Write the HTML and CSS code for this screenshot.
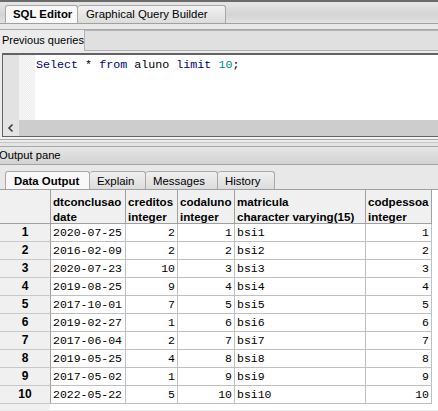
FILE: index.html
```html
<!DOCTYPE html>
<html>
<head>
<meta charset="utf-8">
<link rel="stylesheet" href="styles.css">
</head>
<body>
<div class="topline"></div>
<div class="tabbar">
  <div class="tab active">SQL Editor</div>
  <div class="tab gqb">Graphical Query Builder</div>
</div>
<div class="tabsep"></div>
<div class="prevrow">
  <span class="prevlabel">Previous queries</span>
  <div class="combo"></div>
</div>
<div class="editor">
  <div class="editbody">
    <div class="gutter"></div>
    <div class="fold"></div>
    <div class="code"><span class="kw">Select</span> * <span class="kw">from</span> aluno <span class="kw">limit</span> <span class="num">10</span>;</div>
  </div>
  <div class="hscroll">
    <div class="arrow"><svg width="16" height="16" viewBox="0 0 16 16"><path d="M9.5 4.5 L6 8 L9.5 11.5" fill="none" stroke="#404040" stroke-width="1.6"/></svg></div>
    <div class="track"></div>
  </div>
</div>
<div class="splitter"></div>
<div class="outhead">Output pane</div>
<div class="outgap"></div>
<div class="tabbar2">
  <div class="tab2 active t1">Data Output</div>
  <div class="tab2 t2">Explain</div>
  <div class="tab2 t3">Messages</div>
  <div class="tab2 t4">History</div>
</div>
<div class="grid">
  <div class="row head">
    <div class="c lab"></div>
    <div class="c">dtconclusao<br>date</div>
    <div class="c">creditos<br>integer</div>
    <div class="c">codaluno<br>integer</div>
    <div class="c">matricula<br>character varying(15)</div>
    <div class="c">codpessoa<br>integer</div>
  </div>
  <div class="row"><div class="c lab">1</div><div class="c">2020-07-25</div><div class="c r">2</div><div class="c r">1</div><div class="c">bsi1</div><div class="c r">1</div></div>
  <div class="row"><div class="c lab">2</div><div class="c">2016-02-09</div><div class="c r">2</div><div class="c r">2</div><div class="c">bsi2</div><div class="c r">2</div></div>
  <div class="row"><div class="c lab">3</div><div class="c">2020-07-23</div><div class="c r">10</div><div class="c r">3</div><div class="c">bsi3</div><div class="c r">3</div></div>
  <div class="row"><div class="c lab">4</div><div class="c">2019-08-25</div><div class="c r">9</div><div class="c r">4</div><div class="c">bsi4</div><div class="c r">4</div></div>
  <div class="row"><div class="c lab">5</div><div class="c">2017-10-01</div><div class="c r">7</div><div class="c r">5</div><div class="c">bsi5</div><div class="c r">5</div></div>
  <div class="row"><div class="c lab">6</div><div class="c">2019-02-27</div><div class="c r">1</div><div class="c r">6</div><div class="c">bsi6</div><div class="c r">6</div></div>
  <div class="row"><div class="c lab">7</div><div class="c">2017-06-04</div><div class="c r">2</div><div class="c r">7</div><div class="c">bsi7</div><div class="c r">7</div></div>
  <div class="row"><div class="c lab">8</div><div class="c">2019-05-25</div><div class="c r">4</div><div class="c r">8</div><div class="c">bsi8</div><div class="c r">8</div></div>
  <div class="row"><div class="c lab">9</div><div class="c">2017-05-02</div><div class="c r">1</div><div class="c r">9</div><div class="c">bsi9</div><div class="c r">9</div></div>
  <div class="row"><div class="c lab">10</div><div class="c">2022-05-22</div><div class="c r">5</div><div class="c r">10</div><div class="c">bsi10</div><div class="c r">10</div></div>
  <div class="filler"><div class="fillab"></div></div>
</div>
</body>
</html>
```
FILE: styles.css
```css
html, body {
  margin: 0;
  padding: 0;
}
body {
  width: 438px;
  height: 411px;
  overflow: hidden;
  background: #ececec;
  font-family: "Liberation Sans", Arial, sans-serif;
  font-size: 11px;
  color: #000;
}
.topline {
  height: 2px;
  background: #6b6b6b;
}
.tabbar {
  height: 21px;
  display: flex;
  align-items: flex-end;
  padding-left: 5px;
  background: linear-gradient(#e6e6e6, #d4d4d4 60%, #e2e2e2);
  border-bottom: 1px solid #a0a0a0;
}
.tab {
  box-sizing: border-box;
  height: 18px;
  line-height: 17px;
  padding: 0 0 0 8px;
  border: 1px solid #a8a8a8;
  border-bottom: none;
  border-radius: 3px 3px 0 0;
  background: linear-gradient(#f2f2f2, #dcdcdc);
  font-size: 11.4px;
  white-space: nowrap;
}
.tab.active {
  width: 73px;
  font-weight: bold;
  background: #f8f8f8;
  padding-left: 7px;
}
.tab.gqb {
  width: 148px;
  border-left: none;
}
.tabsep {
  height: 5px;
  background: #e8e8e8;
  border-bottom: 1px solid #a8a8a8;
}
.prevrow {
  height: 23px;
  display: flex;
  align-items: flex-start;
  background: #ececec;
}
.prevlabel {
  flex: 0 0 82px;
  padding: 4px 0 0 2px;
  box-sizing: border-box;
  white-space: nowrap;
  font-size: 11px;
}
.combo {
  flex: 1;
  height: 19px;
  background: #e0e0e0;
  border-top: 1px solid #b4b4b4;
  border-left: 1px solid #b4b4b4;
  border-bottom: 1px solid #b0b0b0;
}
.editor {
  margin-left: 2px;
  border-top: 2px solid #636363;
  border-left: 1px solid #636363;
  border-bottom: 1px solid #636363;
  background: #fff;
}
.editbody {
  height: 65px;
  display: flex;
}
.gutter {
  width: 16px;
  background: #e2e2e2;
}
.fold {
  width: 16px;
  background-color: #f6f6f6;
  background-image: linear-gradient(45deg, #efefef 25%, transparent 25%, transparent 75%, #efefef 75%), linear-gradient(45deg, #efefef 25%, transparent 25%, transparent 75%, #efefef 75%);
  background-size: 2px 2px;
  background-position: 0 0, 1px 1px;
}
.code {
  padding: 3px 0 0 1px;
  font-family: "Liberation Mono", "Courier New", monospace;
  font-size: 11.7px;
  line-height: 15px;
  white-space: pre;
}
.kw { color: #00007f; }
.num { color: #008b8b; }
.hscroll {
  height: 16px;
  display: flex;
}
.arrow {
  width: 16px;
  height: 16px;
  background: #e4e4e4;
}
.arrow svg { display: block; }
.track {
  flex: 1;
  background: #cdcdcd;
}
.splitter {
  height: 10px;
  background: linear-gradient(#f4f4f4 0, #f4f4f4 2px, #a8a8a8 2px, #a8a8a8 3px, #ececec 3px, #ececec 5px, #c4c4c4 5px, #c4c4c4 6px, #e4e4e4 6px, #e4e4e4 9px, #a8a8a8 9px);
}
.outhead {
  height: 17px;
  line-height: 17px;
  margin-left: -1px;
  font-size: 11.2px;
  background: linear-gradient(#e6e6e6, #dadada 60%, #d2d2d2);
  border-bottom: 1px solid #a4a4a4;
}
.outgap {
  height: 6px;
  background: #e8e8e8;
}
.tabbar2 {
  height: 18px;
  display: flex;
  align-items: flex-end;
  padding-left: 5px;
  background: #e8e8e8;
  border-bottom: 1px solid #a0a0a0;
}
.tab2 {
  box-sizing: border-box;
  height: 18px;
  line-height: 18px;
  padding: 0 0 0 7px;
  border: 1px solid #a8a8a8;
  border-bottom: none;
  border-radius: 3px 3px 0 0;
  background: linear-gradient(#f0f0f0, #dcdcdc);
  font-size: 11.4px;
  white-space: nowrap;
}
.tab2.active {
  font-weight: bold;
  background: #f8f8f8;
  padding-left: 8px;
}
.tab2 + .tab2 { border-left: none; }
.t1 { width: 85px; }
.t2 { width: 56px; }
.t3 { width: 72px; }
.t4 { width: 57px; }
.grid {
  background: #fff;
  height: 220px;
  display: flex;
  flex-direction: column;
}
.row {
  display: grid;
  grid-template-columns: 51px 75px 52px 57px 131px 66px;
  height: 18px;
  font-family: "Liberation Mono", "Courier New", monospace;
  font-size: 11.5px;
}
.c {
  box-sizing: border-box;
  border-right: 1px solid #c0c0c0;
  border-bottom: 1px solid #c0c0c0;
  padding: 0 2px;
  line-height: 17px;
  white-space: nowrap;
  overflow: hidden;
}
.c.r { text-align: right; }
.c.lab {
  background: #f0f0f0;
  font-family: "Liberation Sans", Arial, sans-serif;
  font-weight: bold;
  font-size: 12px;
  text-align: center;
  border-right: 1px solid #a0a0a0;
  border-bottom: 1px solid #c8c8c8;
}
.row.head {
  height: 34px;
}
.row.head .c {
  background: #f0f0f0;
  font-family: "Liberation Sans", Arial, sans-serif;
  font-weight: bold;
  font-size: 11.6px;
  line-height: 15px;
  padding: 4px 0 0 2px;
  border-right: 1px solid #a0a0a0;
  border-bottom: 1px solid #a0a0a0;
}
.filler {
  flex: 1;
}
.fillab {
  width: 50px;
  height: 100%;
  background: #f0f0f0;
}
```
